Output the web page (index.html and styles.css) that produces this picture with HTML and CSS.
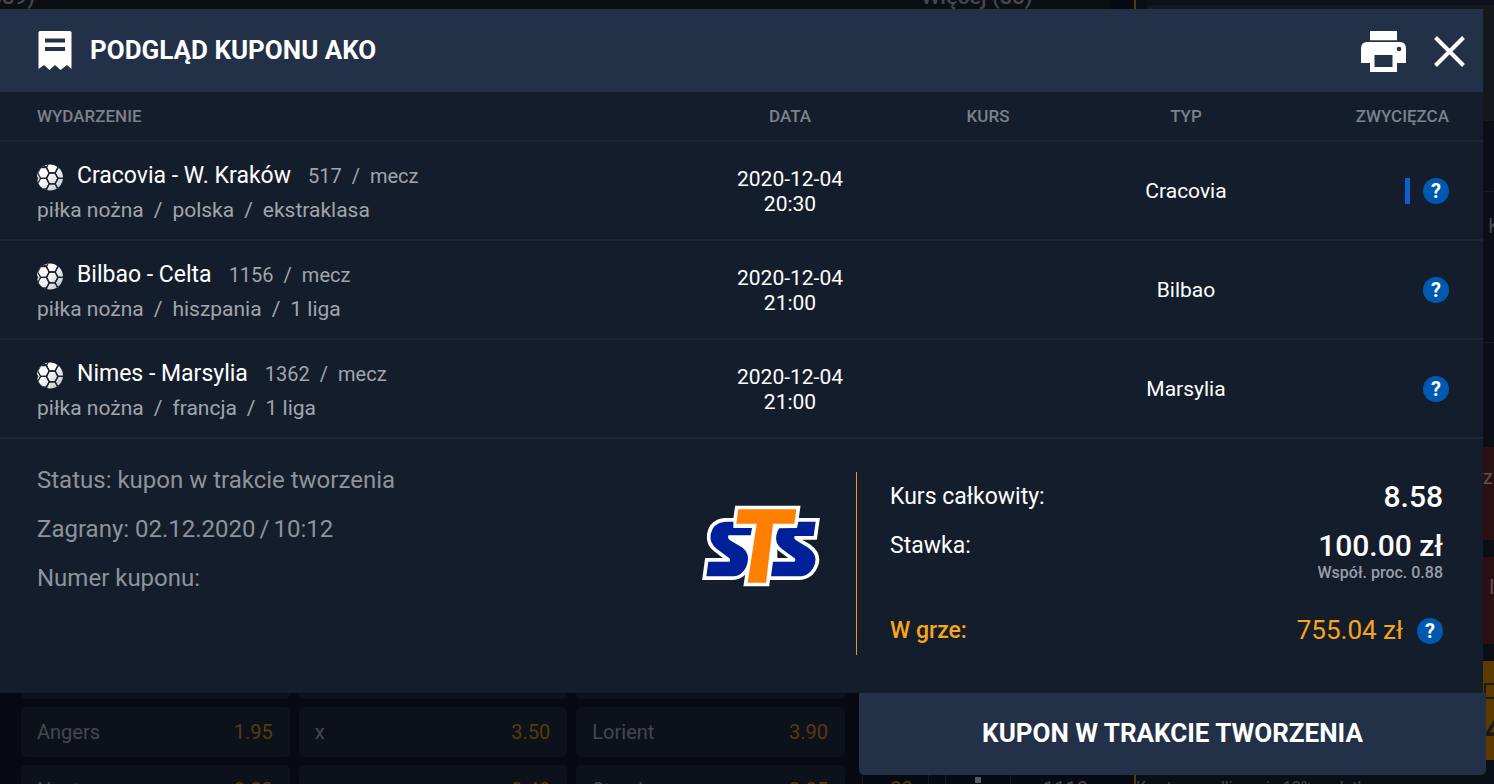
FILE: index.html
```html
<!DOCTYPE html>
<html lang="pl">
<head>
<meta charset="utf-8">
<title>Podgląd kuponu AKO</title>
<link rel="stylesheet" href="styles.css">
</head>
<body>
<svg class="defs" aria-hidden="true">
  <defs>
    <linearGradient id="shade" gradientUnits="userSpaceOnUse" x1="0" y1="0" x2="26" y2="27">
      <stop offset="0.4" stop-color="#fff"/>
      <stop offset="1" stop-color="#b4b8be"/>
    </linearGradient>
    <clipPath id="round"><circle cx="13" cy="13.500" r="13"/></clipPath>
    <path id="hex" d="M-5.8 0-2.900-5.400H2.900L5.8 0 2.900 5.400H-2.900Z"/>
    <symbol id="ball" viewBox="0 0 26 27">
      <g clip-path="url(#round)">
        <rect width="26" height="27" fill="url(#shade)"/>
        <g fill="none" stroke="#1b2331" stroke-width="1.300" stroke-linejoin="round">
          <use href="#hex" x="6.500" y="9"/>
          <use href="#hex" x="6.500" y="19.800"/>
          <use href="#hex" x="15.200" y="3.600"/>
          <use href="#hex" x="15.200" y="14.400"/>
          <use href="#hex" x="15.200" y="25.200"/>
          <use href="#hex" x="23.900" y="9"/>
          <use href="#hex" x="23.900" y="19.800"/>
        </g>
        <path d="M3 4 7 1 10 3 8 4ZM0 12 1.500 14.500 0 17ZM4 25 9 24.500 11 27Z" fill="#141d2c"/>
      </g>
    </symbol>
  </defs>
</svg>

<div class="page" aria-hidden="true">
  <div class="page-main">
    <div class="page-tabs"><span>(889)</span></div>
    <div class="odds">
      <div class="odd"></div><div class="odd"></div><div class="odd"></div>
      <div class="odd"><span>Angers</span><b>1.95</b></div>
      <div class="odd"><span>x</span><b>3.50</b></div>
      <div class="odd"><span>Lorient</span><b>3.90</b></div>
      <div class="odd"><span>Nantes</span><b>2.20</b></div>
      <div class="odd"><span></span><b>3.40</b></div>
      <div class="odd"><span>Strasbourg</span><b>3.25</b></div>
    </div>
  </div>
  <div class="page-middle">
    <div class="page-tabs"><span>Więcej (88)</span></div>
    <div class="scores"><b>22</b><i></i><em></em><span>1118</span></div>
  </div>
  <div class="page-side">
    <div class="side-top"></div>
    <div class="side-row first"></div>
    <div class="side-row"><span>K</span></div>
    <div class="side-row last"></div>
    <div class="side-bet"><span>z</span></div>
    <div class="side-bet"><span>I</span></div>
    <div class="side-cta"><i></i><b>4</b></div>
    <div class="side-note">Kwota po odliczeniu 12% podatku</div>
  </div>
</div>

<main class="modal">
  <header class="modal-head">
    <svg class="receipt" viewBox="0 0 34 40" aria-hidden="true">
      <path d="M2 0H32Q33.500 0 33.500 1.500V38L29 34 22.500 39 17 34 11.500 39 6 34 .5 38V1.500Q.5 0 2 0Z" fill="#fff"/>
      <path d="M7 9.500H27M7 18H27" stroke="#223147" stroke-width="4"/>
    </svg>
    <h1>PODGLĄD KUPONU AKO</h1>
    <button class="icon-button" aria-label="Drukuj">
      <svg class="printer" viewBox="0 0 46 42" aria-hidden="true">
        <path d="M9 1H36V10H9ZM6 12H39Q45 12 45 19V33H36V42H9V33H0V19Q0 12 6 12Z" fill="#fff"/>
        <path d="M9 10.500H36" stroke="#5f6b7c"/>
        <path d="M13.500 25H31.500V37H13.500Z" fill="#223147"/>
        <circle cx="38" cy="19" r="2.300" fill="#223147"/>
      </svg>
    </button>
    <button class="icon-button" aria-label="Zamknij">
      <svg class="close" viewBox="0 0 32 32" aria-hidden="true">
        <path d="M1.500 2.500 29.500 30.500M29.500 2.500 1.500 30.500" stroke="#fff" stroke-width="4"/>
      </svg>
    </button>
  </header>

  <table class="events">
    <thead>
      <tr><th class="event">WYDARZENIE</th><th>DATA</th><th>KURS</th><th>TYP</th><th class="winner">ZWYCIĘZCA</th></tr>
    </thead>
    <tbody>
      <tr>
        <td class="event">
          <div class="match"><svg class="ball"><use href="#ball"/></svg><strong>Cracovia - W. Kraków</strong><span class="path"><span>517</span><span>/</span><span>mecz</span></span></div>
          <div class="path"><span>piłka nożna</span><span>/</span><span>polska</span><span>/</span><span>ekstraklasa</span></div>
        </td>
        <td>2020-12-04<br>20:30</td><td></td><td>Cracovia</td>
        <td class="winner"><div class="result"><i class="mark"></i><button class="help" aria-label="Pomoc">?</button></div></td>
      </tr>
      <tr>
        <td class="event">
          <div class="match"><svg class="ball"><use href="#ball"/></svg><strong>Bilbao - Celta</strong><span class="path"><span>1156</span><span>/</span><span>mecz</span></span></div>
          <div class="path"><span>piłka nożna</span><span>/</span><span>hiszpania</span><span>/</span><span>1 liga</span></div>
        </td>
        <td>2020-12-04<br>21:00</td><td></td><td>Bilbao</td>
        <td class="winner"><div class="result"><button class="help" aria-label="Pomoc">?</button></div></td>
      </tr>
      <tr>
        <td class="event">
          <div class="match"><svg class="ball"><use href="#ball"/></svg><strong>Nimes - Marsylia</strong><span class="path"><span>1362</span><span>/</span><span>mecz</span></span></div>
          <div class="path"><span>piłka nożna</span><span>/</span><span>francja</span><span>/</span><span>1 liga</span></div>
        </td>
        <td>2020-12-04<br>21:00</td><td></td><td>Marsylia</td>
        <td class="winner"><div class="result"><button class="help" aria-label="Pomoc">?</button></div></td>
      </tr>
    </tbody>
  </table>

  <section class="summary">
    <div class="status">
      <p>Status: kupon w trakcie tworzenia</p>
      <p>Zagrany: 02.12.2020<span class="slash">/</span>10:12</p>
      <p>Numer kuponu:</p>
    </div>
    <svg class="logo" viewBox="36 134 354 246" role="img" aria-label="STS">
      <g stroke="#fff" stroke-width="22" fill="#fff">
        <path d="M186 203 182 225H115Q112 234 120 240L158 262Q180 280 172 310 160 348 125 348H49L55 304H118Q123 298 117 293L80 265Q58 250 62 222 68 188 105 184H130V203Z"/>
        <path d="M325 184H377L371 227H314Q310 234 318 240L355 262Q383 282 375 310 362 348 325 348H243L249 304H313Q319 298 313 293L275 265Q254 250 259 225 262 210 268 204L321 203Z"/>
        <path d="M145 147H319L313 190H249L228 367H173L200 190H139Z"/>
      </g>
      <path d="M115 225H262V300H180Z" fill="#fff"/>
      <g fill="#00209a">
        <path d="M186 203 182 225H115Q112 234 120 240L158 262Q180 280 172 310 160 348 125 348H49L55 304H118Q123 298 117 293L80 265Q58 250 62 222 68 188 105 184H130V203Z"/>
        <path d="M325 184H377L371 227H314Q310 234 318 240L355 262Q383 282 375 310 362 348 325 348H243L249 304H313Q319 298 313 293L275 265Q254 250 259 225 262 210 268 204L321 203Z"/>
      </g>
      <path d="M145 147H319L313 190H249L228 367H173L200 190H139Z" fill="#ff7f00" stroke="#fff" stroke-width="8" paint-order="stroke"/>
    </svg>
    <dl class="totals">
      <div class="total"><dt>Kurs całkowity:</dt><dd>8.58</dd></div>
      <div class="total"><dt>Stawka:</dt><dd>100.00 zł</dd></div>
      <div class="factor">Współ. proc. 0.88</div>
      <div class="total win"><dt>W grze:</dt><dd>755.04 zł <button class="help" aria-label="Pomoc">?</button></dd></div>
    </dl>
  </section>

  <button class="submit">KUPON W TRAKCIE TWORZENIA</button>
</main>
</body>
</html>
```
FILE: styles.css
```css
* { box-sizing: border-box; }

body {
  margin: 0;
  height: 100vh;
  overflow: hidden;
  position: relative;
  background: #070a12;
  font-family: Roboto, "Liberation Sans", sans-serif;
  font-size: 21px;
  line-height: 25px;
  color: #fff;
}

h1, p, dl, dd { margin: 0; }
button { border: 0; padding: 0; font: inherit; color: inherit; cursor: pointer; }
.defs { position: absolute; width: 0; height: 0; }

/* dimmed page behind the dialog */
.page { position: absolute; inset: 0; display: flex; overflow: hidden; color: #45484d; font-size: 20px; }
.page-main { width: 859px; display: flex; flex-direction: column; justify-content: space-between; }
.page-tabs { display: flex; align-items: flex-end; height: 9px; background: #0b0f12; font-size: 22px; font-weight: 500; }
.page-tabs span { line-height: 24px; margin-left: -18px; }
.odds {
  display: grid;
  grid-template-columns: repeat(3, 1fr);
  grid-auto-rows: 50px;
  gap: 8px 9px;
  padding: 0 14px 0 21px;
  margin-bottom: -31px;
}
.odd { display: flex; justify-content: space-between; align-items: center; padding: 0 17px 0 16px; border-radius: 5px; background: #0d121a; }
.odd b { font-weight: 400; color: #553c0d; }

.page-middle { flex: 1; display: flex; flex-direction: column; justify-content: space-between; }
.page-middle .page-tabs { padding-left: 80px; margin-right: 25px; }
.scores { display: flex; height: 11px; margin-left: 3px; line-height: 32px; border-left: 1px solid #171b22; overflow: hidden; }
.scores b { width: 66px; padding-left: 12px; text-align: center; font-weight: 400; color: #553c0d; border-right: 1px solid #171b22; }
.scores i { width: 17px; border-right: 1px solid #171b22; }
.scores em { width: 6px; height: 6px; margin: 4px 29px 0; background: #55585c; }
.scores span { padding-left: 32px; border-left: 1px solid #171b22; }

.page-side { width: 360px; display: flex; flex-direction: column; border-left: 2px solid #553806; background: #0b0e14; }
.page-side > div { flex: none; }
.side-top { height: 121px; margin: 0 0 0 11px; border-top: 5px solid #0c1018; background: #14181d; }
.side-row { height: 151px; padding: 22px 0 0 352px; border-top: 1px solid #161a20; overflow: hidden; }
.side-row.first { height: 70px; border-top: 0; }
.side-row.last { height: 105px; }
.side-bet { height: 93px; padding: 18px 0 0 347px; margin-bottom: 17px; background: #2b1013; color: #5a5255; }
.side-bet + .side-bet { height: 87px; padding-left: 353px; }
.side-cta { height: 99px; padding: 22px 0 0 348px; background: #5c3a00; color: #1b1a1a; overflow: hidden; }
.side-cta i { display: block; width: 18px; height: 16px; border: 2px solid #1b1a1a; }
.side-cta b { display: block; font-size: 32px; line-height: 62px; }
.side-note { padding-top: 18px; font-size: 16px; line-height: 20px; white-space: nowrap; background: #0a0e15; }

/* dialog */
.modal { position: absolute; top: 9px; left: 0; right: 11px; display: flex; flex-direction: column; background: #141d2c; }
.modal-head { display: flex; align-items: center; height: 83px; padding: 0 17px 0 38px; background: #223147; }
.modal-head h1 { flex: 1; margin-left: 18px; padding-bottom: 2px; font-size: 26px; line-height: 32px; font-weight: 700; }
.icon-button { display: flex; margin-left: 27px; background: none; }
.receipt { width: 34px; height: 40px; }
.printer { width: 46px; height: 42px; }
.close { width: 32px; height: 32px; }

.events { width: 100%; table-layout: fixed; border-collapse: collapse; text-align: center; }
.events th { width: 198px; height: 49px; padding: 0; font-size: 17px; font-weight: 500; color: #7c818b; }
.events td { height: 99px; padding: 2px 0 0; }
.events tr { border-bottom: 2px solid #1c2636; }
.events .event { width: auto; padding-left: 37px; text-align: left; }
.events td.event { padding-top: 4px; }
.events td.winner { padding-top: 0; }
.events .winner { padding-right: 34px; text-align: right; }
.match { display: flex; align-items: center; height: 34px; }
.match strong { margin: 0 17px 0 14px; font-size: 23px; font-weight: 400; }
.ball { width: 26px; height: 27px; margin-top: 3px; }
.path { display: flex; gap: 10px; line-height: 34px; color: #a1a5ab; }
.match .path { font-size: 20px; }
.result { display: flex; justify-content: flex-end; gap: 13px; }
.mark { width: 5px; height: 26px; background: #0b5fce; }
.help { width: 26px; height: 26px; border-radius: 50%; background: #0059b0; color: #fff; font-size: 20px; line-height: 26px; font-weight: 700; text-align: center; }

.summary { display: flex; padding: 33px 40px 38px 37px; }
.status { flex: 1; margin-top: -16px; font-size: 24px; line-height: 49px; color: #8e939b; }
.slash { padding: 0 4px; }
.logo { width: 118px; height: 82px; margin: 33px 36px 0 0; }
.totals { width: 587px; height: 183px; padding-left: 33px; border-left: 1px solid #e59b1c; }
.total { display: flex; justify-content: space-between; align-items: center; height: 49px; font-size: 23px; }
.total dd { font-size: 30px; font-weight: 500; }
.factor { margin-top: -7px; font-size: 16px; line-height: 20px; font-weight: 500; text-align: right; color: #9a9ea6; }
.total.win { margin-top: 23px; font-weight: 500; color: #f9a51a; }
.total.win dd { display: flex; align-items: center; gap: 14px; font-size: 26px; font-weight: 400; }

.submit { align-self: flex-end; width: 627px; height: 82px; margin: 0 -3px -82px 0; padding-bottom: 2px; border-radius: 0 0 5px 5px; background: #223147; font-size: 26px; font-weight: 700; }
```
